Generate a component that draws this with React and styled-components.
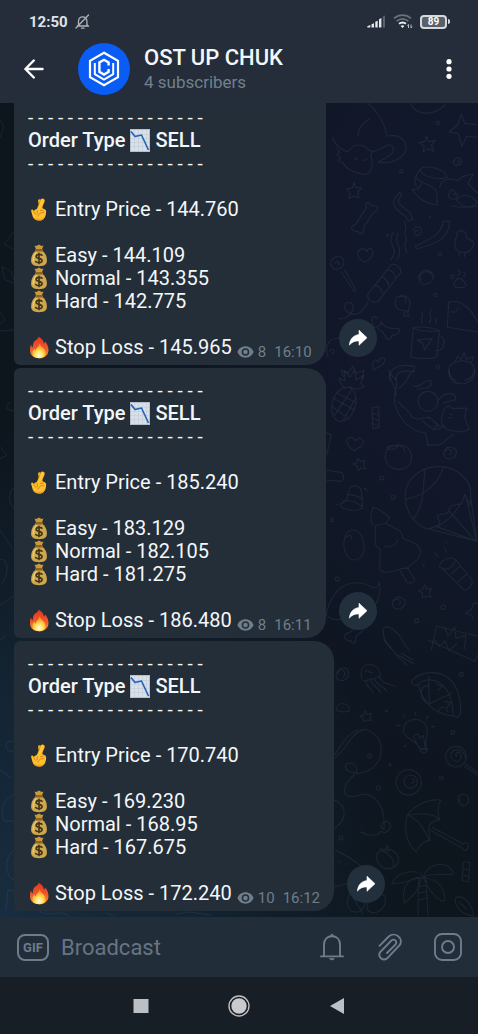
import React from "react";
import styled, { createGlobalStyle } from "styled-components";

const GlobalStyle = createGlobalStyle`
  * { box-sizing: border-box; }
  body { margin: 0; background: #171e26; }
  button, input { font-family: inherit; }
  button { border: 0; padding: 0; background: none; color: inherit; cursor: pointer; }
  svg { display: block; }
`;

const Screen = styled.div`
  height: 100vh;
  display: flex;
  flex-direction: column;
  font-family: Roboto, "Liberation Sans", sans-serif;
  color: #f4f7f9;
`;

const TopBar = styled.header`
  flex: none;
  background: #252d3a;
  padding-top: 8px;
`;

const StatusBar = styled.div`
  height: 27px;
  padding: 0 28px 0 29px;
  display: flex;
  align-items: center;
  justify-content: space-between;
  color: #dfe3e7;
`;

const StatusGroup = styled.div`
  display: flex;
  align-items: center;
  gap: 7px;
`;

const Clock = styled.time`
  font-size: 15px;
  font-weight: 700;
`;

const TitleRow = styled.div`
  height: 68px;
  padding: 0 15px 0 20px;
  display: flex;
  align-items: center;
`;

const IconButton = styled.button`
  flex: none;
  width: ${(p) => p.$size}px;
  height: ${(p) => p.$size}px;
  display: flex;
  align-items: center;
  justify-content: center;
`;

const Avatar = styled.div`
  flex: none;
  width: 52px;
  height: 52px;
  margin: 0 14px 0 30px;
  border-radius: 50%;
  background: #0a5cf5;
  display: flex;
  align-items: center;
  justify-content: center;
`;

const TitleText = styled.div`
  flex: 1;
  min-width: 0;
`;

const ChatName = styled.h1`
  margin: 0;
  font-size: 22px;
  line-height: 26px;
  font-weight: 500;
`;

const Subscribers = styled.p`
  margin: 0;
  font-size: 17px;
  line-height: 22px;
  color: #71808e;
`;

const Chat = styled.main`
  position: relative;
  flex: 1;
  min-height: 0;
  overflow: hidden;
  background:
    radial-gradient(ellipse 85% 60% at 0% 100%, #182d3f 0%, #132331 50%, transparent 100%),
    radial-gradient(ellipse 90% 75% at 100% 20%, #12182b 25%, transparent 100%),
    #0d151d;
`;

const Wallpaper = styled.svg`
  position: absolute;
  inset: 0;
  width: 100%;
  height: 100%;
`;

const Feed = styled.div`
  position: relative;
  height: 100%;
  padding: 0 14px 6px;
  display: flex;
  flex-direction: column;
  justify-content: flex-end;
  gap: 3px;
`;

const MessageRow = styled.article`
  flex: none;
  display: flex;
  align-items: flex-end;
  gap: 13px;
`;

const Bubble = styled.div`
  padding: ${(p) => (p.$scrolled ? 34 : 11)}px 14px 6px;
  border-radius: 6px 20px 20px 6px;
  background: #232e39;
`;

const Line = styled.div`
  height: 23px;
  display: flex;
  align-items: center;
  gap: 5px;
  font-size: 20px;
  line-height: 23px;
  font-weight: ${(p) => (p.$bold ? 500 : 400)};
  white-space: nowrap;
`;

const DashedLine = styled(Line)`
  font-size: 19px;
`;

const Meta = styled.span`
  align-self: flex-end;
  display: flex;
  align-items: center;
  gap: 4px;
  font-size: 15px;
  line-height: 14px;
  color: #6f7e8b;
`;

const SentAt = styled.time`
  margin-left: 4px;
`;

const ShareButton = styled.button`
  flex: none;
  width: 38px;
  height: 38px;
  margin-bottom: 8px;
  border-radius: 50%;
  background: #22303d;
  display: flex;
  align-items: center;
  justify-content: center;
`;

const Composer = styled.form`
  flex: none;
  height: 60px;
  padding: 0 15px 0 17px;
  display: flex;
  align-items: center;
  background: #222d3a;
  color: #6f7c8b;
`;

const GifButton = styled.button`
  flex: none;
  width: 32px;
  height: 27px;
  border: 2px solid #6f7c8b;
  border-radius: 8px;
  font-size: 13px;
  font-weight: 700;
`;

const MessageInput = styled.input`
  flex: 1;
  min-width: 0;
  margin-left: 12px;
  padding: 0;
  border: 0;
  outline: 0;
  background: none;
  color: #f4f7f9;
  font-size: 22px;
  &::placeholder { color: #687482; opacity: 1; }
`;

const ComposerActions = styled.div`
  display: flex;
  align-items: center;
  gap: 28px;
`;

const NavBar = styled.nav`
  flex: none;
  height: 57px;
  display: flex;
  align-items: center;
  justify-content: center;
  gap: 68px;
  background: #171e26;
`;

const ChartDown = () => (
  <svg width="20" height="23" viewBox="0 0 20 23" aria-label="chart decreasing">
    <rect x="0.5" y="0.5" width="19" height="22" fill="#d9e0e8" stroke="#b5bfca" />
    <path d="M4.500 1v21M8.500 1v21M12.500 1v21M16.500 1v21M1 5.500h18M1 9.500h18M1 13.500h18M1 17.500h18" stroke="#c1cbd6" strokeWidth=".6" />
    <path d="M1 2.500 5 7.500 11.500 6 18.500 21" fill="none" stroke="#1f62b8" strokeWidth="1.600" strokeLinejoin="round" />
  </svg>
);

const Fingers = () => (
  <svg width="22" height="23" viewBox="0 0 22 23" aria-label="crossed fingers">
    <g fill="none" strokeLinecap="round">
      <path d="M13.600 13 11.600 2.800" stroke="#f2ab22" strokeWidth="3.200" />
      <path d="M10 13.500 14.600 2.800" stroke="#d98d18" strokeWidth="4.400" />
      <path d="M10.200 13.500 14.600 2.600" stroke="#fdc632" strokeWidth="3.400" />
    </g>
    <path d="M7.500 11.600c3-1.600 6.800-1.700 9.300-.3 1.500.9 1.500 2.500 1.200 4.200-.7 4.300-2.500 7-6.800 7-3.600 0-5.400-1.600-6.500-4l-1.500-5.200c-.4-1.700 1.200-2.300 2-1.200l.6 1.200c.2-.8.800-1.400 1.700-1.700z" fill="#fdc02f" />
    <path d="M6 13.500c.3 1.300.9 2.400 1.900 3M9 12.300c.7 1.300.6 2.400 0 3.600M10 18.200c.6-2.600 2.800-4 6-3.700M12.500 12.500l2.800-.3" fill="none" stroke="#d98714" strokeWidth="1" strokeLinecap="round" />
    <path d="M5 19c1.200 2.300 3 3.500 6.200 3.500 2.800 0 4.600-1.200 5.600-3.600-2.800 2.300-8.100 2.600-11.800.1z" fill="#eea01f" />
  </svg>
);

const MoneyBag = () => (
  <svg width="22" height="23" viewBox="0 0 22 23" aria-label="money bag">
    <path d="M6.500 1.500c1.500.8 2.200.4 3.200-.2.900-.6 1.700-.6 2.600 0 1 .6 1.700 1 3.200.2L13.700 6H8.300z" fill="#c99a3b" />
    <path d="M8 6.500C4.500 9 3.100 12.500 3.100 16.500c0 4 2.400 5.700 7.900 5.700s7.900-1.700 7.900-5.700c0-4-1.400-7.500-4.900-10z" fill="#cda64d" />
    <path d="M8 8c-2.600 2.500-3.600 5.500-3.400 8.500.2 2 .9 2.500 1.300.5C6.300 13 7 10.500 9 8z" fill="#e8cd7a" />
    <rect x="7" y="5" width="8" height="2.400" rx="1.200" fill="#8e6423" />
    <path d="M14 11.200c-1-1.100-5.700-1.500-5.900 1.200-.2 2.600 6 1.300 6 4.100 0 2.700-5 2.600-6.400 1M11 9.300v10.300" fill="none" stroke="#3f3519" strokeWidth="1.600" strokeLinecap="round" />
  </svg>
);

const Fire = () => (
  <svg width="22" height="23" viewBox="0 0 22 23" aria-label="fire">
    <defs>
      <linearGradient id="flame" x1="0" y1="0" x2="0" y2="1">
        <stop offset="0" stopColor="#d93a22" />
        <stop offset=".55" stopColor="#f4572a" />
        <stop offset="1" stopColor="#fb9b2c" />
      </linearGradient>
      <radialGradient id="core" cx=".5" cy=".8" r=".65">
        <stop offset="0" stopColor="#fffbe0" />
        <stop offset=".5" stopColor="#ffdf56" />
        <stop offset="1" stopColor="#fb9526" />
      </radialGradient>
    </defs>
    <path d="M10.500.7c4 2 5.200 4.500 5.300 7 .9-.5 1.200-1.400 1.100-2.500 2.500 2.800 3.600 5.700 3.600 8.700 0 5-3.700 8.400-9.300 8.400-6 0-9.200-3.300-9.200-8.200 0-2 .2-3.800 1.100-5.800.1 1.500.6 2.500 1.600 3.200C4.800 7.300 6 5.200 8 4c1.500-.9 2.400-1.800 2.500-3.300z" fill="url(#flame)" />
    <path d="M11.700 7.500c.4 3 5.800 4.500 5.800 9 0 3.700-2.400 5.700-6.400 5.700-4.100 0-6.700-2-6.700-5.200 0-2 .9-3.200 2.100-4.400.2 1.100.6 1.700 1.300 2.100 0-3 3.300-4 3.900-7.200z" fill="url(#core)" />
  </svg>
);

const Eye = () => (
  <svg width="17" height="12" viewBox="0 0 17 12" aria-label="views">
    <path fillRule="evenodd" d="M8.500.3C12.300.3 15.200 2.500 16.600 6c-1.400 3.500-4.300 5.700-8.100 5.700S1.800 9.500.4 6C1.800 2.500 4.700.3 8.500.3zm0 1.900a3.800 3.800 0 1 0 0 7.600 3.800 3.800 0 0 0 0-7.600z" fill="currentColor" />
    <circle cx="8.500" cy="6" r="2.300" fill="currentColor" />
  </svg>
);

const MutedBell = () => (
  <svg width="15" height="16" viewBox="0 0 15 16" fill="none" stroke="#aeb4bc" strokeWidth="1.300" strokeLinecap="round" aria-label="muted">
    <path d="M3.500 11.500V7a4.200 4.200 0 0 1 8.400 0v3.500l1.300 1.500H1.900zM6.500 14.200h2.600M13.500 1 1 14" />
  </svg>
);

const Signal = () => (
  <svg width="19" height="13" viewBox="0 0 19 13" aria-label="signal">
    <path d="M.3 12.500v-1.300l3-1.200v2.500zM4.500 9.200l2.500-1v4.300H4.500zM8.300 6.800l2.400-1v6.700H8.300zM12 4.200l2.400-1.200v9.500H12z" fill="#e6e9ec" />
    <path d="m15.800 1.500 2.200-1v12h-2.200z" fill="#59616c" />
  </svg>
);

const Wifi = () => (
  <svg width="20" height="15" viewBox="0 0 20 15" fill="none" aria-label="wifi">
    <path d="M1 4.300c5-4.300 12-4.300 17 0M3.600 7.200c3.600-2.900 8.200-2.900 11.800 0" stroke="#68717c" strokeWidth="1.700" />
    <path d="M6 9.800c2.200-1.700 4.800-1.700 7 0" stroke="#eceef0" strokeWidth="1.900" />
    <path d="m7.600 11.900 1.900 2.200 1.900-2.200c-1.200-.9-2.600-.9-3.800 0z" fill="#eceef0" />
    <path d="M15.500 14v-3.500M14.300 11.800l1.200-1.400M18 10.500V14l1.200-1.300" stroke="#b7bdc4" strokeWidth="1" />
  </svg>
);

const BatteryBody = styled.span`
  width: 27px;
  height: 14px;
  border: 2px solid #d5d9dd;
  border-radius: 4px;
  background: #59606b;
  color: #ffffff;
  font-size: 10px;
  line-height: 10px;
  font-weight: 700;
  text-align: center;
`;

const BatteryTip = styled.span`
  width: 2px;
  height: 5px;
  margin-left: 1px;
  border-radius: 0 2px 2px 0;
  background: #d5d9dd;
`;

const BatteryWrap = styled.span`
  display: flex;
  align-items: center;
`;

const ChannelLogo = () => (
  <svg width="32" height="36" viewBox="0 0 32 36" fill="none" stroke="#fff" strokeWidth="2.200" aria-hidden="true">
    <path d="M16 1.800 30 9.900v16.200l-14 8.100-14-8.100V9.900z" />
    <path d="M6.800 12v11.200l9.200 5.400 9.200-5.400V12" strokeWidth="2" />
    <path d="M20.600 14.500v-3L16 8.800l-4.600 2.700v9.400l4.600 2.700 4.600-2.700v-3" strokeWidth="2.400" />
  </svg>
);

const ShareArrow = () => (
  <svg width="20" height="18" viewBox="0 0 20 18" aria-hidden="true">
    <path d="M11 1.200 19 8.700l-8 7.600v-4.400c-4-.2-6.800.9-9.600 4.200C1.800 10.500 5 6.300 11 5.500z" fill="#fff" stroke="#fff" strokeWidth=".6" strokeLinejoin="round" />
  </svg>
);

const Wall = () => (
  <Wallpaper viewBox="0 103 478 814" preserveAspectRatio="xMaxYMax slice" aria-hidden="true">
    <g fill="none" stroke="#5b6c8c" strokeOpacity=".18" strokeWidth="3.400" strokeLinecap="round" strokeLinejoin="round">
      <g transform="translate(318 100) scale(.3333)">
        <path d="M150 10c35 30 50 60 58 98 50-8 70 30 45 60-18 20-45 22-72 19 20-14 42-18 45-35 2-16-12-22-22-14-16 10-30 14-44 18M120 108c0-28 20-40 36-52M42 112c10 22 28 38 48 44l12-14c16-12 38-8 48 8l14 4-6 14c10 24 2 54-18 56-30-4-54-16-66-36l-14-6 8-8-12-12 10-4-10-14M108 172c4 8 8 8 12 2M136 178c4 6 8 4 10-2M280 12c10 30 60 42 102 2" />
        <path d="m430 42 10 28 36 4M430 42l-10 30-26 24 26 4 12 38 14-30 30 4M325 108l7 16 20-2-12 14 8 18-18-8-14 10 2-18-14-10 18-4zM108 248l5 14 18 2-12 12 4 18-16-6-14 8 2-18-8-12 16-2z" />
        <path d="M306 208c20-16 76 0 82 24-26 10-74 0-82-24zm0 0c-12 16-22 42-10 50M296 235c20 18 50 20 60 40l2 40c-30-2-60-20-76-48 8 6 26-4 28-18M365 262c8-34 40-24 54-20l14-12 34-8-18 28 30 30M394 280c2-16 24-12 14 4 20-12 8 24-8 12-10-4-10-12-6-16M416 300c20-24 50-12 62 8-20 18-44 18-62-8M400 318c28 4 44 6 78 0M408 186c2-20 26-14 22 0-4 14-28 12-24-4M418 186c4 2 6 0 4-4" />
        <path d="M244 277c-24 26-22 42 4 62 16 8 20 14 22 24l14-4c-2-20-14-26-30-38-16-16-18-16-2-38zM225 398c-14 26-2 34 4 54 2 14-8 20-10 28M240 400c-14 26 10 34 4 60-2 14-4 14-8 20M260 364l4 20-4 16 6 20-6 14 6 24M376 364c-6 40-36 52-84 74 4 10 8 10 14 6 56-14 90-34 88-80zM286 392c4-20 30-10 24 4-4 12-20 14-20 2 0-8 10-8 10-2" />
        <path d="M146 322c-14-16 16-18 14-4 20-6 26 12 6 20l-30 46c4 20-16 22-16 10-16 4-30-16-8-20zM140 486c-30-14-24-36-6-40 8 0 12 6 14 10 0-18 20-12 16 6-2 12-10 18-24 24M60 470c20-4 28 32-4 38-26 0-22-38 4-38zM52 490c4-10 14-4 10 4M70 516l38 58 6-4-34-60M220 494c14-6 30 10 28 24l-68 86c-20 8-34-8-30-22zM208 510c16 0 22 10 24 24M190 530c14 4 20 14 22 26M170 556c14 0 20 10 24 26M150 606c-30 64-76 30-70 10 6-18 32-8 24 14-10 24-30 28-42 26M310 540c-16-20 20-36 34-14 12 22-40 44-42 6 4-30 44-26 44 0" />
        <path d="M418 410c-10-24 32-24 26 0 4 12 22 8 24 20-6 40-60 34-58 4 0-10 2-18 8-24zM424 460v10M440 460v10M408 554c8-34 30-14 36 0 4 14-36 10-36 0zM400 526c8-6 12 10 4 10s-4-10-4-10zM420 512c10 0 6 14 0 12M438 518c8 2 4 14-2 10M232 606c0-26 40-26 44 0l-4 28-28-4c-10-6-14-14-12-24zM244 590c16-4 24 6 18 18M260 634l-4 14h16l-4-14M392 606c46-10 70 30 88 60M392 606l-4 76 92 14M400 634c10 8 20-2 20-10M286 682l-8 90c26 4 60 6 78 0l8-80c-20-10-50-12-78-10 10 12 56 14 78 10M362 706c26 6 20 50-8 46M298 720l44-4-22 34-6-20zM314 670c-12-16 8-20-4-36M334 668c14-16-6-20 6-40M354 670l2-14" />
        <path d="M178 654c-24-14-16 12-10 30 20-6 24-10 20-20 10 20 28 22 56 22 2 14-6 20-22 20-2 14-14 14-18 8-4-14-10-20-24-28M30 770c-14-40 10-60 40-54M34 754c12-20 20 10 8 6M168 810c-10-20 2-40 12-24 10-24 30-10 14 8-8 6-18 8-26 16zM214 840c0-40 34-50 76-40l-4 14c-30-2-54-2-52 26M76 830l-6-20 20 10 14-22 10 22 24-8-6 24M394 800c20-26 66-22 76 6-4 26-16 34-30 34M394 800c-8 20 6 36 18 40M410 786l8-16 12 8 8-20 8 20 20-8-6 18" />
        <circle cx="360" cy="68" r="5" /><circle cx="250" cy="214" r="5" /><circle cx="366" cy="463" r="5" /><circle cx="352" cy="585" r="5" /><circle cx="360" cy="800" r="5" /><circle cx="208" cy="406" r="2" /><circle cx="335" cy="352" r="2" />
      </g>
      <g transform="translate(318 370) scale(.3333)">
        <path d="M76 54c30-14 48 30 32 64-10 30-40 50-60 24-18-30 0-76 28-88zM44 84l66 36M56 68l58 30M42 110l50 36M100 60l-50 76M112 86l-36 64M84 56c-20-14-20-24-20-32l16 8V2l16 20 14-22 4 30 24-14-10 24 12 10-26 8-20-8" />
        <path d="M162 114l20-4 2 62-20 4zM162 128l22 8M162 144l22 8M162 160l22 8M108 242c-30-20-24-42-6-40l10 10c16-18 30 0 18 16zM212 0c10 34 30 10 22 56-20 60 30 126 90 134M234 76c0-40-20-30-20-76M286 44c10 20 40-24 54-10 2 30-30 16-40 24M242 96c18 20 34 30 40 44 20 20 40-10 60 8l20 20 20 2M378 120l12-14 16 10 40-2-6 30 14 34-20 8-46-6c-24-20-20-30-10-60zM394 130l8 6M390 144l10-2M324 194l6 32 36-2 40-30M312 152c20 10 30 40 60 20M332 140l28 24-14 14M360 92c20-30 60-26 52-2l-36 8M240 54c40-20 20-40 50-50M394 0c-8 60 84 50 76 0" />
        <circle cx="330" cy="94" r="30" />
        <path d="M206 240c24-26 80-20 74 30-6 36-64 38-76 4-4-14-2-24 2-34zM242 226c-14 6-24-4-36 6 8 10 24 8 36-6zm0 0c14 4 18 14 18 20M378 250c0-30 46-20 36 4-14 24-46 10-34-10 16-16 28 4 16 10M20 300l52 8c6 10 6 20-2 26l-48-4M20 186l20 8-14 60M120 264l7 10 14-2-4 12 6 12-14-2-8 8-4-14-12-6 12-4z" />
        <path d="M262 386c-6-50 40-100 110-96 50 4 90 44 86 86l-2 30-16-32-8 26-34 8-10 22-30 6 8 28-32 12c-30 0-70-40-72-90zM264 388c50-10 92-40 112-96M322 296c-10 60 2 100-36 152M356 470l120 44-34-140M330 476l146 38M392 422l80 90M458 380l18 130M400 440l-40 30M430 400l-30 40" />
        <path d="M66 402c40-10 10-60 50-54 20 4 14 30 18 66-20 14-70 4-68-12zM76 394c30-6 40 4 58 16M88 374c20 0 30 4 42 12M138 354l10 8M54 404l6-2M104 480c40 0 50 90 4 90-40-4-40-88-4-90zM86 500l12-4 4 12M166 410c20 10 40 20 48 34l-10 16c20 14 50 20 50 40-4 12 50 12 54 44-2 34-34 34-38 52-20-10-60 26-84 4-4-30 4-42 0-64-20-4-14-30-14-68-24-4-8-54-6-58zM176 466l28-6M200 528c14 6 30 2 40-18M246 602l22 36c12 4 22-2 22-8l-22-38" />
        <path d="M364 590c6-26 40-30 50-20l48 60c4 14-12 32-24 30l-56-56zM364 590c20 14 40 6 48-18M400 612l26-24M420 636l26-24M384 520v-4M386 548l-6-16M360 560l-10-12M320 644l7 14 14-2-8 12 6 14-16-4-10 6v-16l-12-6 14-4zM224 700c0-30 46-20 36 4-14 24-46 10-34-10 16-16 28 4 16 10M24 734c20-80 70-120 144-80 12 0 14-10 16-18 6 40-6 80-40 84M24 734c20 20 50 20 60 0M94 788l44-36c0-14 20-14 14 0 14-4 12 14 0 12l-40 38c4 24-14 20-14 10-20 0-26-18-4-24M196 776c10-14 40 4 56 34l20 30M196 776c-2 30 10 50 24 60M356 768l120 30M356 768l-16 72M380 772l10 26 20-26 4 34 30-10-4 40M442 730c10-10 20-4 24-30h14M442 730c14 6 20 0 24 18" />
        <circle cx="192" cy="324" r="6" /><circle cx="225" cy="381" r="6" /><circle cx="42" cy="450" r="5" /><circle cx="58" cy="627" r="6" /><circle cx="376" cy="712" r="7" /><circle cx="296" cy="752" r="6" /><circle cx="317" cy="586" r="2" />
      </g>
      <g transform="translate(318 640) scale(.3333)">
        <path d="M60 104c-2-30 40-26 30 4-10 24-44 14-34-10 12-20 34-2 20 14M130 96c4-34 50-30 58 8-4 12-40 14-48 20-10-4-12-14-10-28zM140 96c10-14 14 8 24 0M144 124c0 20 20 20 20 34M158 120c4 20 24 20 30 40M170 118c10 24 30 20 36 36M184 110c10 24 30 20 50 30M200 0l34 42M240 44l48 28M250 40l34 20M230 40l36 34M330 0l140 64 10-20M350 0l14 20 18-18 10 30 24-20" />
        <path d="M280 124c30-40 150-50 148 90-2 16-10 20-20 14-50-4-90-30-108-94-14 4-20-4-20-10zM300 134c30-30 100-20 106 92M332 110l2 82M332 192l72-34M332 192c-30-10-30-60 0-54M354 132l20 6-14 14M380 184l18 4-10 14M364 212c4-20 28-8 24 4" />
        <path d="M54 210c4-28 40-24 40 2-10 6-30 4-40-2zM142 212l6 12 12-4-4 14 4 8-14-2-8 6-2-12-10-6 12-4zM306 326c-6-22-52-34-50-54 0-46 72-44 72 0-2 24-8 34-2 58zM306 326l22 0c0 18-20 16-22 0M286 290l16 32M290 286l10-4 6 12 10-8 6 36M292 226v-10M262 232l-6-8M324 236l8-8M246 256h-10M340 260h10M264 316l-6 4M50 354c40-30 50-80 90-86 70 20 60 100 10 124-40 20-80-4-64-20 16-10 36 10 28 26-20 20-40 40-34 60 10 24 40 6 60 4 60 10 60 80 58 106-20-6-4-30 16-20 10 20-10 36-26 26-10 20-50 10-50 4l-12-2M50 344c20-30 40-64 70-74" />
        <circle cx="414" cy="350" r="31" /><path d="M416 350c-10-14 14-20 14 0-4 24-36 14-30-10 10-20 40-10 42 14M442 372l38 26M440 380l40 26" /><circle cx="272" cy="427" r="38" /><circle cx="278" cy="425" r="20" /><path d="M284 416c10 6 2 16-4 12M422 484c-8-30 38-30 28 4-10 16-34 6-24-10M268 526c20-30 60-50 100-46-10 16-10 46-2 60-20-2-34 14-34 24l4 38c-20 0-38 20-40 34-34-24-38-76-28-110zM268 526c50-10 80-4 98 14M268 526c40 14 50 44 66 76M342 562l94 50c10-10 18 0 14 10-2 14-20 8-18 2l-96-54" />
        <path d="M176 644c20-34 76-10 64 24-20 36-70 14-64-24zM200 628c14 30 30 20 26 54M186 624l14 14 8-22 4 20M50 480c40 20 36 60 0 84M52 630c40 20 70 40 90 60M50 740c30-10 60-4 90-30M60 666h6M84 672h4M302 716l-2 110M324 712l6 114M300 740l26-4M300 760l28-6M302 780l26-6M222 730c20-40 80-44 96-18-30-8-50 24-96 18zM318 712c4-44 80-54 88-10-20 6-60-8-88 10zM310 714c-50 0-60 40-50 76 20-20 40-30 50-76zM316 714c40 0 70 30 62 70-20 0-50-40-62-70zM436 666l20 0-4 60-20-4zM434 684l20 8M434 704l18 6M412 774c24-14 50 20 56 54-26-2-60-20-56-54zM426 788l20 20M88 790c0-50 40-60 54 0-4 30-50 40-54 0zM148 810c-10-30 40-60 54-40 4 40-30 60-54 40M104 770l30 50" />
        <circle cx="430" cy="103" r="6" /><circle cx="404" cy="277" r="6" /><circle cx="155" cy="348" r="6" /><circle cx="181" cy="444" r="6" /><circle cx="69" cy="594" r="6" /><circle cx="370" cy="413" r="5" /><circle cx="216" cy="374" r="3" /><circle cx="205" cy="213" r="3" />
      </g>
      <g strokeWidth="1">
        <path d="M0 120l4 6-4 12M14 232l-10 12 10 5M2 267l9 4 3 9M2 267l3 13 9 3M0 312l5 8-5 4M0 331l14-1M9 402l-3 7 8 2M0 447l7 8-7 4M14 488c-6 2-6 16 0 20M0 530l12 18M0 560c8-4 10 14 2 24M14 596c-8 4-10 8-14 9M0 640l5-4M14 742c-10-4-12 10 0 10M0 770l11 8M14 795c-12 4-14 18-10 26h10M14 850c-10 6-10 26 0 30M8 890l12 2-4 20M8 890l-2 20M40 911c10 8 20-4 30 6M106 913l8 3M176 914l14-2 20 3" />
      </g>
    </g>
  </Wallpaper>
);

const RULE = "- - - - - - - - - - - - - - - - - -";

const orders = [
  { entry: "144.760", easy: "144.109", normal: "143.355", hard: "142.775", stop: "145.965", views: 8, time: "16:10" },
  { entry: "185.240", easy: "183.129", normal: "182.105", hard: "181.275", stop: "186.480", views: 8, time: "16:11" },
  { entry: "170.740", easy: "169.230", normal: "168.95", hard: "167.675", stop: "172.240", views: 10, time: "16:12" },
];

const Order = ({ order, scrolled }) => (
  <MessageRow>
    <Bubble $scrolled={scrolled}>
      <DashedLine>{RULE}</DashedLine>
      <Line $bold><span>Order Type</span><ChartDown /><span>SELL</span></Line>
      <DashedLine>{RULE}</DashedLine>
      <Line />
      <Line><Fingers /><span>Entry Price - {order.entry}</span></Line>
      <Line />
      <Line><MoneyBag /><span>Easy - {order.easy}</span></Line>
      <Line><MoneyBag /><span>Normal - {order.normal}</span></Line>
      <Line><MoneyBag /><span>Hard - {order.hard}</span></Line>
      <Line />
      <Line>
        <Fire />
        <span>Stop Loss - {order.stop}</span>
        <Meta><Eye /><span>{order.views}</span><SentAt>{order.time}</SentAt></Meta>
      </Line>
    </Bubble>
    <ShareButton type="button" aria-label="Share"><ShareArrow /></ShareButton>
  </MessageRow>
);

export default function App() {
  return (
    <Screen>
      <GlobalStyle />
      <TopBar>
        <StatusBar>
          <StatusGroup><Clock>12:50</Clock><MutedBell /></StatusGroup>
          <StatusGroup>
            <Signal />
            <Wifi />
            <BatteryWrap><BatteryBody>89</BatteryBody><BatteryTip /></BatteryWrap>
          </StatusGroup>
        </StatusBar>
        <TitleRow>
          <IconButton type="button" $size={28} aria-label="Back">
            <svg width="20" height="20" viewBox="0 0 20 20" fill="none" stroke="#fff" strokeWidth="2.400" strokeLinecap="round" strokeLinejoin="round">
              <path d="M18.500 10H1.500M9.800 1.500 1.400 10l8.400 8.500" />
            </svg>
          </IconButton>
          <Avatar><ChannelLogo /></Avatar>
          <TitleText>
            <ChatName>OST UP CHUK</ChatName>
            <Subscribers>4 subscribers</Subscribers>
          </TitleText>
          <IconButton type="button" $size={28} aria-label="More options">
            <svg width="6" height="20" viewBox="0 0 6 20" fill="#fff">
              <circle cx="3" cy="2.700" r="2.600" /><circle cx="3" cy="10" r="2.600" /><circle cx="3" cy="17.300" r="2.600" />
            </svg>
          </IconButton>
        </TitleRow>
      </TopBar>

      <Chat>
        <Wall />
        <Feed>
          {orders.map((order, i) => <Order key={order.time} order={order} scrolled={i === 0} />)}
        </Feed>
      </Chat>

      <Composer onSubmit={(e) => e.preventDefault()}>
        <GifButton type="button">GIF</GifButton>
        <MessageInput type="text" placeholder="Broadcast" aria-label="Broadcast" />
        <ComposerActions>
          <IconButton type="button" $size={30} aria-label="Notifications">
            <svg width="26" height="28" viewBox="0 0 26 28" fill="none" stroke="currentColor" strokeWidth="1.900" strokeLinecap="round">
              <path d="M5 23V11.500C5 6 8.500 3.300 13 3.300s8 2.700 8 8.200V23M2 23.400h22" />
              <path d="M11.800 2a1.300 1.300 0 0 1 2.400 0zM10.800 25.700h4.400c-.6 1.500-3.800 1.500-4.400 0z" fill="currentColor" strokeWidth="1" />
            </svg>
          </IconButton>
          <IconButton type="button" $size={30} aria-label="Attach">
            <svg width="26" height="28" viewBox="0 0 26 28" fill="none" stroke="currentColor" strokeWidth="1.900" strokeLinecap="round">
              <path d="M2.500 12.800 11.800 3.500c5.500-5.300 15.200 1.300 11 8.500L10.200 25.300c-4.300 3.500-10-1.500-7-6.300l11.200-11.500c3-2.300 6.200.8 4.200 3.800L10 20" />
            </svg>
          </IconButton>
          <IconButton type="button" $size={30} aria-label="Record video">
            <svg width="28" height="28" viewBox="0 0 28 28" fill="none" stroke="currentColor" strokeWidth="1.900">
              <rect x="1" y="1" width="26" height="26" rx="7" /><circle cx="14" cy="14" r="6" />
            </svg>
          </IconButton>
        </ComposerActions>
      </Composer>

      <NavBar>
        <IconButton type="button" $size={30} aria-label="Recent apps">
          <svg width="16" height="16" viewBox="0 0 16 16"><rect x="0.500" y="1" width="15" height="14" fill="#bcbfc3" /></svg>
        </IconButton>
        <IconButton type="button" $size={30} aria-label="Home">
          <svg width="22" height="22" viewBox="0 0 22 22"><circle cx="11" cy="11" r="10" fill="none" stroke="#bcbfc3" strokeWidth="1.400" /><circle cx="11" cy="11" r="7.700" fill="#c8cacd" /></svg>
        </IconButton>
        <IconButton type="button" $size={30} aria-label="Back navigation">
          <svg width="16" height="18" viewBox="0 0 16 18"><path d="M15 1v16L1 9z" fill="#bcbfc3" /></svg>
        </IconButton>
      </NavBar>
    </Screen>
  );
}
